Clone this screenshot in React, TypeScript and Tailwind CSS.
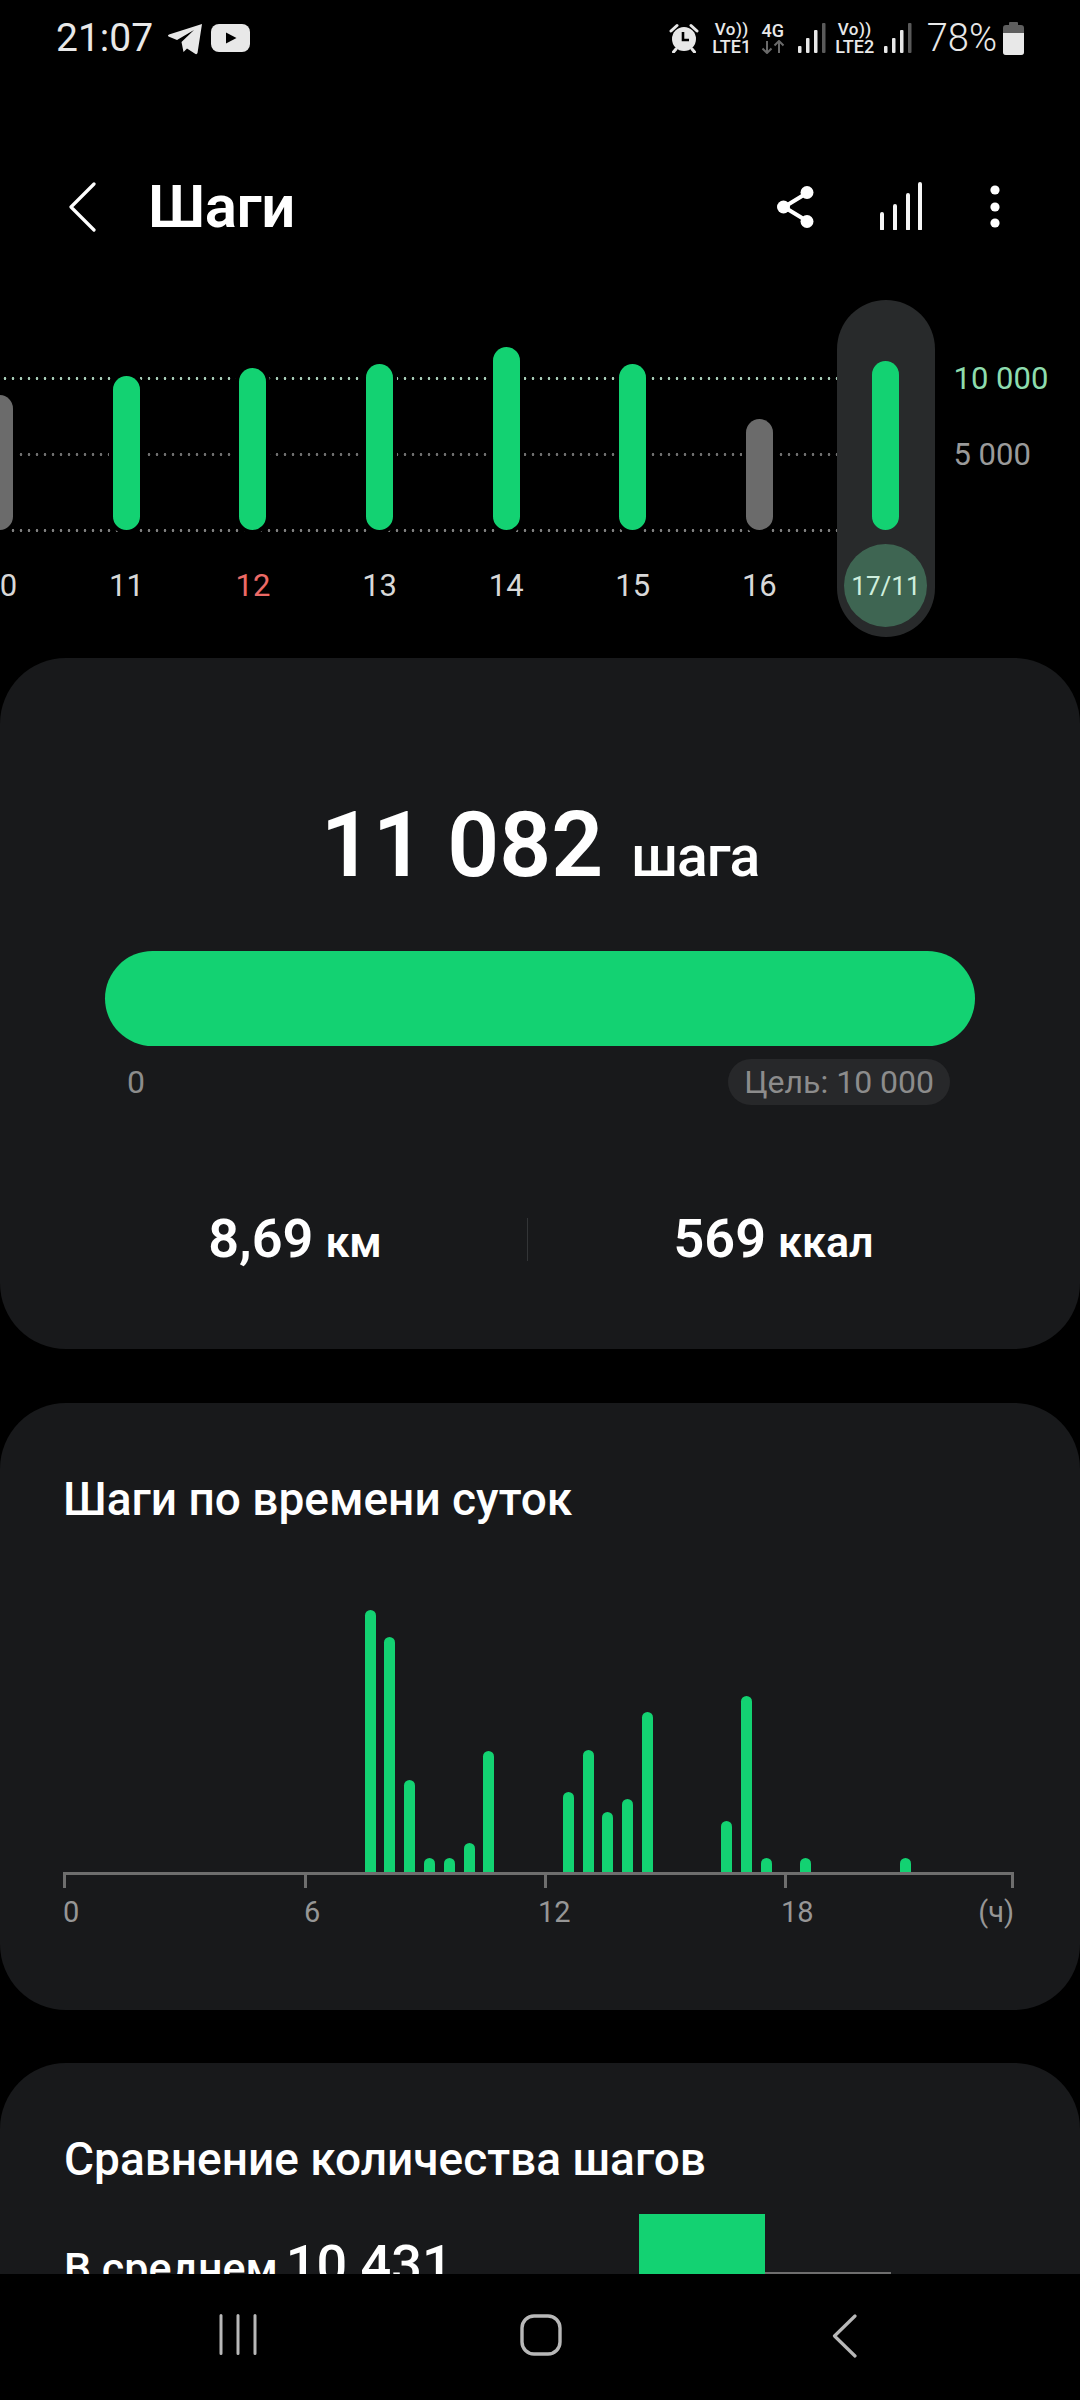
import React from "react";

const GREEN = "#13d272";

function Signal({ dim = true }: { dim?: boolean }) {
  return (
    <svg width="28" height="30" viewBox="0 0 28 30" className="block">
      <rect x="0" y="23" width="3.5" height="7" rx="1" fill="#e8e8e8" />
      <rect x="8" y="15" width="3.5" height="15" rx="1" fill="#e8e8e8" />
      <rect x="16" y="7" width="3.5" height="23" rx="1" fill="#e8e8e8" />
      <rect x="24" y="0" width="3.5" height="30" rx="1" fill={dim ? "#5a5a5a" : "#e8e8e8"} />
    </svg>
  );
}

function VoLte({ label, w }: { label: string; w: string }) {
  return (
    <div className={`flex flex-col items-center ${w} text-[#e8e8e8] font-medium`}>
      <span className="text-[17px] leading-[17px] tracking-[0.5px]">Vo))</span>
      <span className="text-[18px] leading-[17px]">{label}</span>
    </div>
  );
}

function StatusBar() {
  return (
    <div className="flex h-[76px] shrink-0 items-center justify-between pl-[56px] pr-[56px] text-[#e8e8e8]">
      <div className="flex items-center">
        <span className="text-[39px] leading-none">21:07</span>
        <svg width="36" height="32" viewBox="0 0 36 32" className="ml-[14px] mt-[2px]">
          <path d="M35 1 L30.5 30 Q30 31.5 28.5 31 L20 25.5 L16.5 29 L14.5 19 L27 7 L10 17 L1.5 13.5 Q0 12.5 2 11.5 Z" fill="#e8e8e8" />
        </svg>
        <svg width="39" height="28" viewBox="0 0 39 28" className="ml-[8px]">
          <rect width="39" height="28" rx="8" fill="#e8e8e8" />
          <path d="M15 8.5 L25.5 14 L15 19.5 Z" fill="#000" />
        </svg>
      </div>
      <div className="flex items-center">
        <svg width="30" height="30" viewBox="0 0 30 30">
          <path d="M2 8 L8 2.5 M28 8 L22 2.5 M7 26 L4.5 29 M23 26 L25.5 29" stroke="#e8e8e8" strokeWidth="3" strokeLinecap="round" />
          <circle cx="15" cy="16" r="12" fill="#e8e8e8" />
          <path d="M14 9 V17 H20" stroke="#000" strokeWidth="2.6" fill="none" />
        </svg>
        <div className="ml-[13px]"><VoLte label="LTE1" w="w-[40px]" /></div>
        <div className="ml-[8px] flex w-[26px] flex-col items-center font-medium">
          <span className="text-[18px] leading-[17px]">4G</span>
          <svg width="24" height="14" viewBox="0 0 24 14" className="mt-[1px]">
            <path d="M6 1 V13 M1.5 8.5 L6 13 L10.5 8.5" stroke="#6a6a6a" strokeWidth="2" fill="none" />
            <path d="M18 13 V1 M13.5 5.5 L18 1 L22.5 5.5" stroke="#6a6a6a" strokeWidth="2" fill="none" />
          </svg>
        </div>
        <div className="ml-[12px]"><Signal /></div>
        <div className="ml-[9px]"><VoLte label="LTE2" w="w-[40px]" /></div>
        <div className="ml-[9px]"><Signal /></div>
        <span className="ml-[15px] text-[38px] font-light leading-none">78%</span>
        <svg width="21" height="33" viewBox="0 0 21 33" className="ml-[6px]">
          <path d="M7 0 H14 Q15 0 15 1 V3 H18 Q21 3 21 6 V30 Q21 33 18 33 H3 Q0 33 0 30 V6 Q0 3 3 3 H6 V1 Q6 0 7 0 Z" fill="#5e5e5e" />
          <path d="M0 11 H21 V30 Q21 33 18 33 H3 Q0 33 0 30 Z" fill="#e8e8e8" />
        </svg>
      </div>
    </div>
  );
}

function Header() {
  return (
    <div className="mt-[69px] flex h-[124px] shrink-0 items-center pl-[68px] pr-[80px] text-white">
      <svg width="28" height="50" viewBox="0 0 28 50">
        <path d="M26 2 L3 25 L26 48" stroke="#fff" strokeWidth="3.2" fill="none" strokeLinecap="round" strokeLinejoin="round" />
      </svg>
      <h1 className="ml-[52px] text-[60px] font-semibold leading-none tracking-[-0.5px]">Шаги</h1>
      <div className="ml-auto flex items-center">
        <svg width="40" height="44" viewBox="0 0 40 44">
          <path d="M31 8 L8 22 L31 36" stroke="#fff" strokeWidth="4" fill="none" />
          <circle cx="31" cy="7.5" r="6.5" fill="#fff" />
          <circle cx="7.5" cy="22" r="6.5" fill="#fff" />
          <circle cx="31" cy="36.5" r="6.5" fill="#fff" />
        </svg>
        <svg width="44" height="48" viewBox="0 0 44 48" className="ml-[63px] mt-[-2px]">
          <path d="M3 47 V32 M16 47 V24 M29 47 V13 M41 47 V2" stroke="#f6f6f6" strokeWidth="4" strokeLinecap="round" />
        </svg>
        <svg width="10" height="44" viewBox="0 0 10 44" className="ml-[67px]">
          <circle cx="5" cy="5" r="4.6" fill="#fff" />
          <circle cx="5" cy="22" r="4.6" fill="#fff" />
          <circle cx="5" cy="38" r="4.6" fill="#fff" />
        </svg>
      </div>
    </div>
  );
}

const days = [
  { label: "10", h: 135, color: "#6b6b6b", text: "text-[#d8d8d8]" },
  { label: "11", h: 154, color: GREEN, text: "text-[#d8d8d8]" },
  { label: "12", h: 162, color: GREEN, text: "text-[#ec6a66]" },
  { label: "13", h: 166, color: GREEN, text: "text-[#d8d8d8]" },
  { label: "14", h: 183, color: GREEN, text: "text-[#d8d8d8]" },
  { label: "15", h: 166, color: GREEN, text: "text-[#d8d8d8]" },
  { label: "16", h: 111, color: "#6b6b6b", text: "text-[#d8d8d8]" },
];

function WeekChart() {
  return (
    <div className="mt-[31px] flex h-[337px] shrink-0">
      <div className="relative ml-[-63.5px] flex w-[1013px] shrink-0">
        <div className="absolute left-0 top-[77px] h-[3px] w-[901px] bg-[radial-gradient(circle,#a8cdb8_1.1px,transparent_1.6px)] bg-[length:8px_3px]" />
        <div className="absolute left-0 top-[153px] h-[3px] w-[901px] bg-[radial-gradient(circle,#707070_1.1px,transparent_1.6px)] bg-[length:8px_3px]" />
        <div className="absolute left-0 top-[229px] h-[3px] w-[901px] bg-[radial-gradient(circle,#808080_1.1px,transparent_1.6px)] bg-[length:8px_3px]" />
        {days.map((d) => (
          <div key={d.label} className="relative flex w-[126.6px] flex-col items-center">
            <div className="flex h-[230px] items-end">
              <div className="w-[27px] rounded-full shadow-[0_0_0_4px_#000]" style={{ height: d.h, backgroundColor: d.color }} />
            </div>
            <span className={`mt-[38px] text-[31px] leading-[36px] ${d.text}`}>{d.label}</span>
          </div>
        ))}
        <div className="relative flex w-[126.6px] justify-center">
          <div className="flex h-[337px] w-[98px] flex-col items-center rounded-full bg-[#282a2b]">
            <div className="flex h-[230px] items-end">
              <div className="h-[169px] w-[27px] rounded-full" style={{ backgroundColor: GREEN }} />
            </div>
            <div className="mt-[14px] flex h-[83px] w-[83px] items-center justify-center rounded-full bg-[#3e6552] text-[26px] leading-none text-[#cfeedd]">
              17/11
            </div>
          </div>
        </div>
      </div>
      <div className="ml-[4px] flex flex-col pt-[60px] text-[31px] leading-[38px]">
        <span className="text-[#8ddcae]">10 000</span>
        <span className="mt-[38px] text-[#9a9a9a]">5 000</span>
      </div>
    </div>
  );
}

function SummaryCard() {
  return (
    <section className="mt-[21px] h-[691px] shrink-0 rounded-[66px] bg-[#18191b] px-[105px] text-white">
      <div className="flex h-[293px] items-baseline justify-center pt-[132px]">
        <span className="text-[91px] font-semibold leading-[110px]">11 082</span>
        <span className="ml-[28px] text-[57px] font-medium leading-none tracking-[-1px]">шага</span>
      </div>
      <div className="h-[95px] rounded-full" style={{ backgroundColor: GREEN }} />
      <div className="mt-[13px] flex h-[46px] items-center justify-between pl-[22px] pr-[25px] text-[32px] leading-none text-[#8c8c8c]">
        <span>0</span>
        <span className="flex h-[46px] items-center rounded-full bg-[#27282a] px-[16px]">Цель: 10 000</span>
      </div>
      <div className="mt-[111px] flex h-[46px] items-center">
        <div className="flex w-[422px] items-baseline justify-center pr-[42px]">
          <span className="text-[54px] font-semibold leading-none">8,69</span>
          <span className="ml-[12px] text-[43px] font-semibold leading-none">км</span>
        </div>
        <div className="h-[43px] w-[1px] bg-[#333537]" />
        <div className="flex flex-1 items-baseline justify-center pl-[44px]">
          <span className="text-[54px] font-semibold leading-none">569</span>
          <span className="ml-[12px] text-[43px] font-semibold leading-none">ккал</span>
        </div>
      </div>
    </section>
  );
}

const hourly: Record<number, number> = {
  15: 262, 16: 235, 17: 92, 18: 14, 19: 14, 20: 29, 21: 121,
  25: 80, 26: 122, 27: 60, 28: 73, 29: 160,
  33: 51, 34: 176, 35: 14,
  37: 14,
  42: 14,
};

function HourlyCard() {
  const slots = Array.from({ length: 48 }, (_, i) => i);
  const tickWidths = ["w-[241px]", "w-[240px]", "w-[240px]", "w-[227px]"];
  return (
    <section className="mt-[54px] h-[607px] shrink-0 rounded-[66px] bg-[#18191b] px-[63px] text-white">
      <h2 className="pt-[70px] text-[46px] font-medium leading-[52px]">Шаги по времени суток</h2>
      <div className="mt-[82px] flex h-[265px] w-[951px] items-end">
        {slots.map((i) => (
          <div key={i} className="flex flex-1 justify-center">
            {hourly[i] ? (
              <div className="w-[11px] rounded-t-full" style={{ height: hourly[i], backgroundColor: GREEN }} />
            ) : null}
          </div>
        ))}
      </div>
      <div className="h-[3px] w-[951px] bg-[#6e6e6e]" />
      <div className="flex w-[951px]">
        {tickWidths.map((w) => (
          <div key={w} className={`${w} shrink-0`}>
            <div className="h-[13px] w-[3px] bg-[#6e6e6e]" />
          </div>
        ))}
        <div className="h-[13px] w-[3px] bg-[#6e6e6e]" />
      </div>
      <div className="mt-[8px] flex w-[951px] text-[29px] leading-[32px] text-[#969696]">
        <span className="w-[241px]">0</span>
        <span className="w-[234px]">6</span>
        <span className="w-[243px]">12</span>
        <span>18</span>
        <span className="ml-auto">(ч)</span>
      </div>
    </section>
  );
}

function CompareCard() {
  return (
    <section className="mt-[53px] shrink-0 rounded-t-[66px] bg-[#18191b] px-[64px] text-white">
      <h2 className="pt-[70px] text-[46px] font-medium leading-[52px]">Сравнение количества шагов</h2>
      <div className="mt-[29px] flex items-start">
        <div className="flex w-[575px] items-baseline pt-[24px]">
          <span className="text-[43px] font-medium leading-none">В среднем</span>
          <span className="ml-[8px] text-[54px] font-medium leading-none">10 431</span>
        </div>
        <div className="h-[70px] w-[126px]" style={{ backgroundColor: GREEN }} />
        <div className="mt-[58px] h-[3px] w-[126px] bg-[#6e6e6e]" />
      </div>
    </section>
  );
}

function NavBar() {
  return (
    <div className="flex h-[126px] shrink-0 items-start bg-black pl-[219px] pt-[40px]">
      <svg width="38" height="41" viewBox="0 0 38 41">
        <path d="M2 1.5 V39.5 M19 1.5 V39.5 M36 1.5 V39.5" stroke="#b8b8b8" strokeWidth="3" strokeLinecap="round" />
      </svg>
      <svg width="42" height="42" viewBox="0 0 42 42" className="ml-[263px]">
        <rect x="2" y="2" width="38" height="38" rx="12" fill="none" stroke="#b8b8b8" strokeWidth="3.4" />
      </svg>
      <svg width="25" height="44" viewBox="0 0 25 44" className="ml-[270px]">
        <path d="M23 2 L2.5 22 L23 42" fill="none" stroke="#b8b8b8" strokeWidth="3.2" strokeLinecap="round" strokeLinejoin="round" />
      </svg>
    </div>
  );
}

export default function App() {
  return (
    <div className="flex h-[2400px] w-[1080px] flex-col overflow-hidden bg-black font-['Roboto',sans-serif]">
      <div className="flex h-[2274px] shrink-0 flex-col overflow-hidden">
        <StatusBar />
        <Header />
        <WeekChart />
        <SummaryCard />
        <HourlyCard />
        <CompareCard />
      </div>
      <NavBar />
    </div>
  );
}
